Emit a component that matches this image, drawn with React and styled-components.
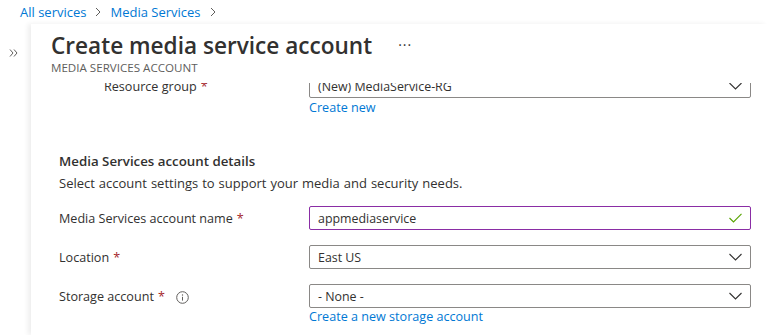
import React from "react";
import styled, { createGlobalStyle } from "styled-components";

const GlobalStyle = createGlobalStyle`
  html, body { margin: 0; padding: 0; background: #fff; }
  body { font-family: "Open Sans", "Noto Sans", sans-serif; color: #323130; }
  * { box-sizing: border-box; }
`;

const Page = styled.div`
  width: 767px;
  height: 335px;
  overflow: hidden;
  display: flex;
  flex-direction: column;
  background: #fff;
`;

const Breadcrumb = styled.nav`
  height: 24px;
  padding-left: 20px;
  display: flex;
  align-items: center;
  gap: 8px;
  font-size: 13px;
`;

const Crumb = styled.a`
  color: #0078d4;
  text-decoration: none;
`;

const Body = styled.div`
  flex: 1;
  display: flex;
  min-height: 0;
`;

const Side = styled.div`
  width: 32px;
  display: flex;
  justify-content: center;
  padding-top: 25px;
  padding-right: 4px;
`;

const Panel = styled.main`
  flex: 1;
  display: flex;
  flex-direction: column;
  min-height: 0;
  box-shadow: -3px 0 5px rgba(0, 0, 0, 0.07);
`;

const Header = styled.header`
  padding: 8px 20px 7px;
`;

const TitleRow = styled.div`
  display: flex;
  align-items: center;
  gap: 26px;
`;

const Title = styled.h1`
  margin: 0;
  font-size: 22.6px;
  line-height: 28px;
  font-weight: 600;
  color: #323130;
`;

const More = styled.span`
  font-size: 14px;
  line-height: 20px;
  color: #323130;
  letter-spacing: 1px;
  margin-top: -2px;
`;

const Subtitle = styled.div`
  font-size: 11.6px;
  line-height: 16px;
  color: #605e5c;
`;

const Scroll = styled.div`
  flex: 1;
  overflow: hidden;
  min-height: 0;
`;

const Content = styled.div`
  margin-top: -9px;
  padding: 0 16px 0 28px;
`;

const Row = styled.div`
  display: grid;
  grid-template-columns: 250px 442px;
  align-items: center;
  margin-top: ${(p) => p.$gap || 0}px;
`;

const Label = styled.label`
  font-size: 12.6px;
  line-height: 20px;
  color: #323130;
  padding-left: ${(p) => p.$indent || 0}px;
  padding-top: 2px;
  display: flex;
  align-items: center;
`;

const Req = styled.span`
  color: #a4262c;
  margin-left: 4px;
`;

const Info = styled.span`
  display: inline-flex;
  margin-left: 11px;
`;

const Field = styled.div`
  height: 24px;
  border: 1px solid ${(p) => (p.$valid ? "#8a2da5" : "#8a8886")};
  border-radius: 2px;
  display: flex;
  align-items: center;
  justify-content: space-between;
  padding: 0 8px 0 8px;
  font-size: 12.4px;
  color: #323130;
`;

const Below = styled.div`
  display: grid;
  grid-template-columns: 250px 442px;
`;

const Link = styled.a`
  grid-column: 2;
  font-size: 12.6px;
  line-height: ${(p) => p.$lh || 20}px;
  color: #0078d4;
  text-decoration: none;
`;

const Section = styled.h2`
  margin: 33px 0 0;
  font-size: 13.3px;
  line-height: 20px;
  font-weight: 600;
  color: #323130;
`;

const Desc = styled.p`
  margin: 2px 0 0;
  font-size: 13px;
  line-height: 20px;
  word-spacing: 0.6px;
  color: #323130;
`;

const Chevron = () => (
  <svg width="8" height="10" viewBox="0 0 8 10">
    <path d="M2 1 L6 5 L2 9" fill="none" stroke="#605e5c" strokeWidth="1" />
  </svg>
);

const DoubleChevron = () => (
  <svg width="9" height="8" viewBox="0 0 9 8">
    <path d="M1 0.5 L4 4 L1 7.5 M5 0.5 L8 4 L5 7.5" fill="none" stroke="#605e5c" strokeWidth="1" />
  </svg>
);

const Down = () => (
  <svg width="13" height="8" viewBox="0 0 13 8">
    <path d="M0.5 1 L6.5 7 L12.5 1" fill="none" stroke="#323130" strokeWidth="1.1" />
  </svg>
);

const Check = () => (
  <svg width="13" height="10" viewBox="0 0 13 10">
    <path d="M0.5 5 L4.5 9 L12.5 0.8" fill="none" stroke="#57a300" strokeWidth="1.1" />
  </svg>
);

const InfoIcon = () => (
  <svg width="13" height="13" viewBox="0 0 13 13">
    <circle cx="6.5" cy="6.5" r="5.8" fill="none" stroke="#605e5c" strokeWidth="1" />
    <circle cx="6.5" cy="4" r="0.7" fill="#605e5c" />
    <path d="M6.5 5.8 V9.6" stroke="#605e5c" strokeWidth="1" />
  </svg>
);

export default function App() {
  return (
    <>
      <GlobalStyle />
      <Page>
        <Breadcrumb>
          <Crumb>All services</Crumb>
          <Chevron />
          <Crumb>Media Services</Crumb>
          <Chevron />
        </Breadcrumb>
        <Body>
          <Side>
            <DoubleChevron />
          </Side>
          <Panel>
            <Header>
              <TitleRow>
                <Title>Create media service account</Title>
                <More>···</More>
              </TitleRow>
              <Subtitle>MEDIA SERVICES ACCOUNT</Subtitle>
            </Header>
            <Scroll>
              <Content>
                <Row>
                  <Label $indent={45}>
                    Resource group<Req>*</Req>
                  </Label>
                  <Field>
                    <span>(New) MediaService-RG</span>
                    <Down />
                  </Field>
                </Row>
                <Below>
                  <Link>Create new</Link>
                </Below>
                <Section>Media Services account details</Section>
                <Desc>Select account settings to support your media and security needs.</Desc>
                <Row $gap={13}>
                  <Label>
                    Media Services account name<Req>*</Req>
                  </Label>
                  <Field $valid>
                    <span>appmediaservice</span>
                    <Check />
                  </Field>
                </Row>
                <Row $gap={15}>
                  <Label>
                    Location<Req>*</Req>
                  </Label>
                  <Field>
                    <span>East US</span>
                    <Down />
                  </Field>
                </Row>
                <Row $gap={15}>
                  <Label>
                    Storage account<Req>*</Req>
                    <Info>
                      <InfoIcon />
                    </Info>
                  </Label>
                  <Field>
                    <span>- None -</span>
                    <Down />
                  </Field>
                </Row>
                <Below>
                  <Link $lh={18}>Create a new storage account</Link>
                </Below>
              </Content>
            </Scroll>
          </Panel>
        </Body>
      </Page>
    </>
  );
}
